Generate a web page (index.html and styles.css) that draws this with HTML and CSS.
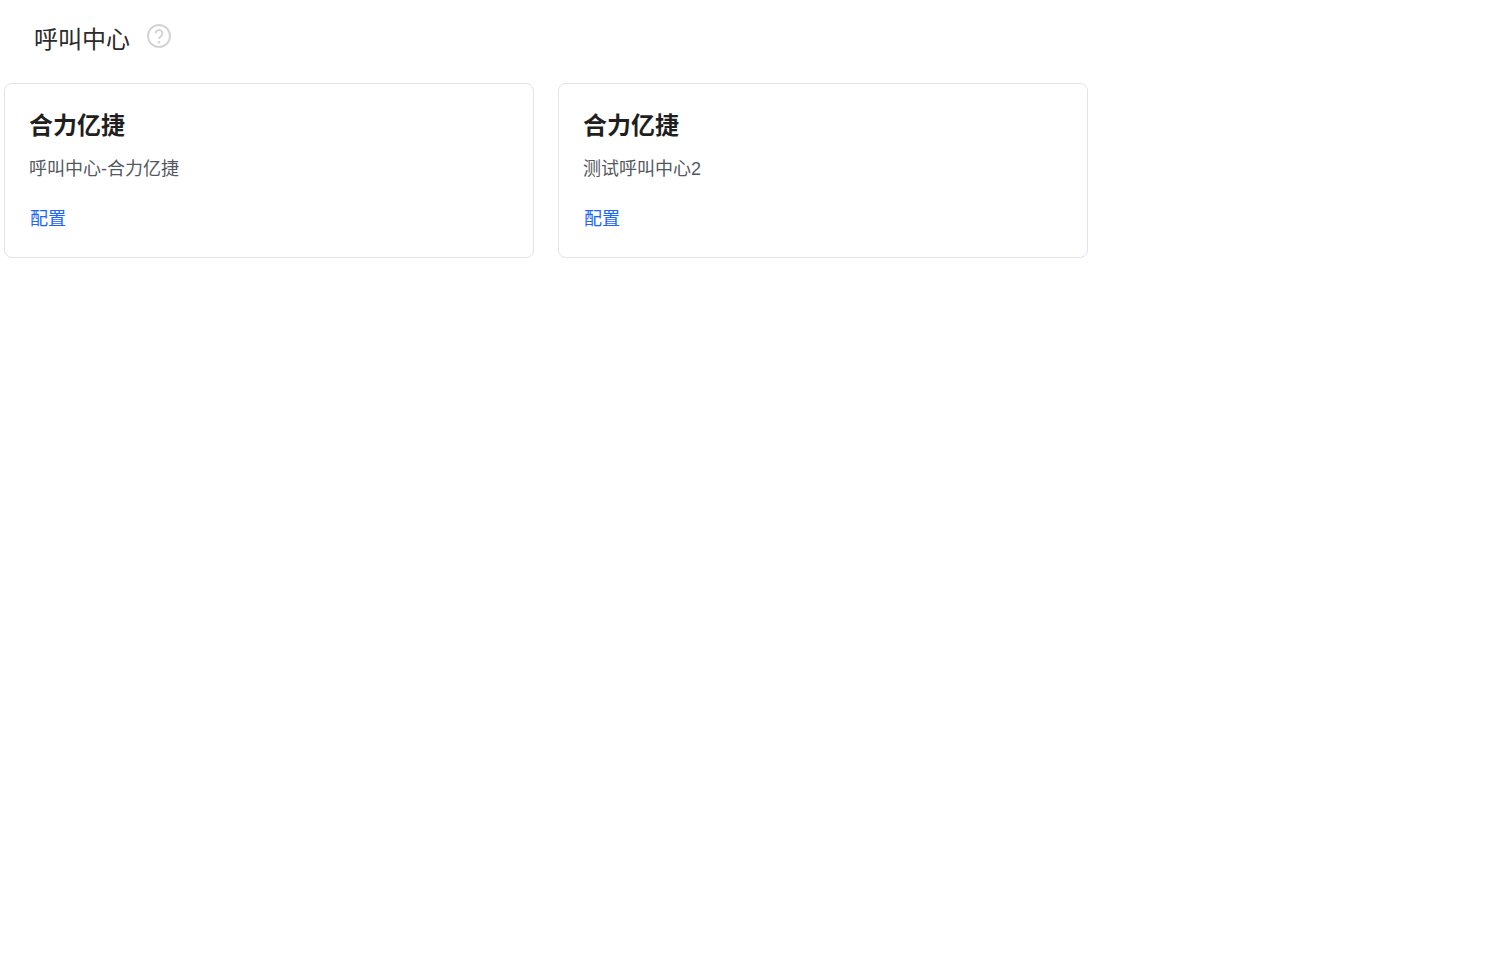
FILE: index.html
```html
<!DOCTYPE html>
<html lang="zh-CN">
<head>
<meta charset="utf-8">
<title>呼叫中心</title>
<link rel="stylesheet" href="styles.css">
</head>
<body>
<header class="page-header">
  <h1 class="page-title">呼叫中心</h1>
  <svg class="help-icon" viewBox="0 0 24 24" width="24" height="24" aria-hidden="true">
    <circle cx="12" cy="12" r="11" fill="none" stroke="#d4d4d4" stroke-width="2"/>
    <path d="M8.6 9.5a3.4 3.4 0 1 1 5.3 2.8c-1.2.8-1.9 1.3-1.9 2.7" fill="none" stroke="#d4d4d4" stroke-width="2"/>
    <circle cx="12" cy="18.2" r="1.3" fill="#d4d4d4"/>
  </svg>
</header>
<main class="card-list">
  <section class="card">
    <h2 class="card-title">合力亿捷</h2>
    <p class="card-desc">呼叫中心-合力亿捷</p>
    <a class="card-link" href="#">配置</a>
  </section>
  <section class="card">
    <h2 class="card-title">合力亿捷</h2>
    <p class="card-desc">测试呼叫中心2</p>
    <a class="card-link" href="#">配置</a>
  </section>
</main>
</body>
</html>
```
FILE: styles.css
```css
* { box-sizing: border-box; }
html, body { margin: 0; padding: 0; background: #fff; }
body {
  font-family: "Liberation Sans", "Noto Sans CJK SC", sans-serif;
  color: #1f2329;
}
.page-header {
  display: flex;
  align-items: flex-start;
  gap: 17px;
  height: 83px;
  padding: 24px 0 0 34px;
}
.page-title {
  margin: 1px 0 0;
  font-size: 24px;
  font-weight: 400;
  line-height: 30px;
  color: #2b2b2b;
}
.help-icon { flex: none; }
.card-list {
  display: flex;
  gap: 24px;
  padding-left: 4px;
}
.card {
  width: 530px;
  height: 175px;
  padding: 24px 24px 0;
  border: 1px solid #e1e3e8;
  border-radius: 8px;
  background: #fff;
}
.card-title {
  margin: 0;
  font-size: 24px;
  font-weight: 700;
  line-height: 36px;
  color: #1f1f1f;
}
.card-desc {
  margin: 12px 0 0;
  font-size: 18px;
  line-height: 26px;
  color: #54585f;
}
.card-link {
  display: block;
  margin: 24px 0 0 1px;
  font-size: 18px;
  line-height: 26px;
  color: #1a66ff;
  text-decoration: none;
}
```
